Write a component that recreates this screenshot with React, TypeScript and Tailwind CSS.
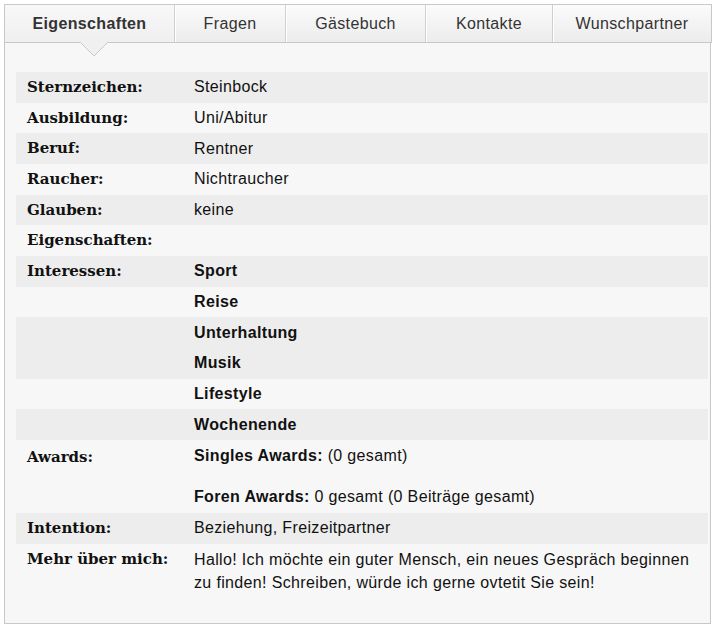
import React from "react";

const tabs = [
  { label: "Eigenschaften", w: "w-[169px]", active: true },
  { label: "Fragen", w: "w-[111px]" },
  { label: "Gästebuch", w: "w-[140px]" },
  { label: "Kontakte", w: "w-[127px]" },
  { label: "Wunschpartner", w: "flex-1" },
];

type Row = { label: string; value?: React.ReactNode; dark: boolean };

const rows: Row[] = [
  { label: "Sternzeichen:", value: "Steinbock", dark: true },
  { label: "Ausbildung:", value: "Uni/Abitur", dark: false },
  { label: "Beruf:", value: "Rentner", dark: true },
  { label: "Raucher:", value: "Nichtraucher", dark: false },
  { label: "Glauben:", value: "keine", dark: true },
  { label: "Eigenschaften:", value: "", dark: false },
  { label: "Interessen:", value: <b>Sport</b>, dark: true },
  { label: "", value: <b>Reise</b>, dark: false },
  { label: "", value: <b>Unterhaltung</b>, dark: true },
  { label: "", value: <b>Musik</b>, dark: true },
  { label: "", value: <b>Lifestyle</b>, dark: false },
  { label: "", value: <b>Wochenende</b>, dark: true },
];

const labelCls =
  "w-[178px] shrink-0 pl-[11px] font-bold text-[15px] text-[#111] font-['DejaVu_Serif',serif]";
const valueCls =
  "text-[16px] tracking-[0.35px] text-[#111] font-['Liberation_Sans',Arial,sans-serif]";

export default function App() {
  return (
    <div className="w-[719px] h-[633px] bg-white pt-[4px] pl-[4px] font-['Liberation_Sans',Arial,sans-serif]">
      <div className="relative w-[708px]">
        <div className="flex h-[39px] border border-[#c8c8c8] bg-gradient-to-b from-[#fbfbfb] to-[#ececec]">
          {tabs.map((t, i) => (
            <div
              key={t.label}
              className={`${t.w} flex items-center justify-center text-[16px] tracking-[0.35px] text-[#333] ${
                i > 0 ? "border-l border-[#d0d0d0] shadow-[inset_1px_0_0_#ffffff]" : ""
              } ${t.active ? "font-bold bg-gradient-to-b from-[#f8f8f8] to-[#efefef]" : ""}`}
            >
              {t.label}
            </div>
          ))}
        </div>
        <svg
          className="absolute left-[76px] top-[38px]"
          width="28"
          height="16"
          viewBox="0 0 28 16"
        >
          <polygon points="0,0 14,14 28,0" fill="#f0f0f0" />
          <polyline points="0.5,0.5 14,14 27.5,0.5" fill="none" stroke="#c8c8c8" strokeWidth="1" />
        </svg>
        <div className="w-[707px] h-[581px] border border-t-0 border-[#c8c8c8] bg-[#f7f7f7] pt-[29px] pl-[11px] pr-[2px]">
          {rows.map((r, i) => (
            <div
              key={i}
              className={`flex items-center h-[30.67px] ${r.dark ? "bg-[#ededed]" : "bg-[#f7f7f7]"}`}
            >
              <div className={labelCls}>{r.label}</div>
              <div className={valueCls}>{r.value}</div>
            </div>
          ))}
          <div className="flex items-start h-[73px] pt-[6px] bg-[#f7f7f7]">
            <div className={labelCls}>Awards:</div>
            <div className={`${valueCls} leading-[20px]`}>
              <div>
                <b>Singles Awards:</b> (0 gesamt)
              </div>
              <div className="mt-[21px]">
                <b>Foren Awards:</b> 0 gesamt (0 Beiträge gesamt)
              </div>
            </div>
          </div>
          <div className="flex items-center h-[31px] bg-[#ededed]">
            <div className={labelCls}>Intention:</div>
            <div className={valueCls}>Beziehung, Freizeitpartner</div>
          </div>
          <div className="flex items-start pt-[4px] bg-[#f7f7f7]">
            <div className={`${labelCls} leading-[22px]`}>Mehr über mich:</div>
            <div className={`${valueCls} leading-[23px] w-[505px]`}>
              Hallo! Ich möchte ein guter Mensch, ein neues Gespräch beginnen zu finden! Schreiben,
              würde ich gerne ovtetit Sie sein!
            </div>
          </div>
        </div>
      </div>
    </div>
  );
}
